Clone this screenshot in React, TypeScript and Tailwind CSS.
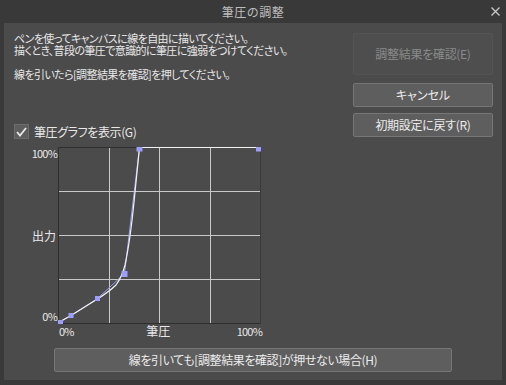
import React from "react";

const font = { fontFamily: '"Noto Sans CJK JP", "Noto Sans", sans-serif' };

function Plot() {
  const L = 0.5, T = 0.5, W = 202, H = 176;
  const xs = [0, 1, 2, 3, 4].map((i) => L + Math.round((W * i) / 4));
  const ys = [0, 1, 2, 3, 4].map((i) => T + Math.round((H * i) / 4));
  const pts: [number, number][] = [
    [0.5, 175.5],
    [13, 168.5],
    [39.5, 151.5],
    [66.5, 126.5],
    [81.5, 0.5],
    [201.5, 0.5],
  ];
  return (
    <svg width={203} height={177} className="block shrink-0">
      {xs.slice(1, 4).map((x) => (
        <line key={"v" + x} x1={x} y1={T} x2={x} y2={T + H} stroke="#c9c9c9" strokeWidth={1} />
      ))}
      {ys.slice(1, 4).map((y) => (
        <line key={"h" + y} x1={L} y1={y} x2={L + W} y2={y} stroke="#c9c9c9" strokeWidth={1} />
      ))}
      <line x1={L} y1={T} x2={L + W} y2={T} stroke="#2e2e2e" />
      <line x1={L} y1={T} x2={L} y2={T + H} stroke="#2e2e2e" />
      <line x1={L} y1={T + H} x2={L + W} y2={T + H} stroke="#2e2e2e" />
      <line x1={L + W} y1={T} x2={L + W} y2={T + H} stroke="#3a3a3a" />
      <polyline
        points={pts.map((p) => p.join(",")).join(" ")}
        fill="none"
        stroke="#9d9dfb"
        strokeWidth={1}
      />
      <path
        d="M0.5,175.5 L13,168.5 L39.5,152 Q52,144 58,138 Q64,130 67,118 Q72,95 76,55 L81.5,0.5 L201.5,0.5"
        fill="none"
        stroke="#f2f2f2"
        strokeWidth={1.2}
      />
      <rect x={0} y={173} width={5} height={5} fill="#9d9dfb" />
      <rect x={10.5} y={166} width={5} height={5} fill="#9d9dfb" />
      <rect x={37} y={149} width={5} height={5} fill="#9d9dfb" />
      <rect x={63.5} y={124} width={6} height={6} fill="#9d9dfb" />
      <rect x={78.5} y={-0.5} width={6} height={5} fill="#9d9dfb" />
      <rect x={198} y={-0.5} width={5} height={5} fill="#9d9dfb" />
    </svg>
  );
}

export default function App() {
  return (
    <div
      className="w-[506px] h-[385px] bg-[#393939] flex flex-col text-[#e8e8e8] text-[11px] overflow-hidden"
      style={font}
    >
      <div className="h-[23px] relative flex items-center justify-center shrink-0">
        <span className="text-[12px] leading-[14px] text-[#bdbdbd] tracking-[0.5px]">筆圧の調整</span>
        <svg className="absolute right-[6px] top-[7px]" width={9} height={9} viewBox="0 0 9 9">
          <path d="M0.5,0.5 L8.5,8.5 M8.5,0.5 L0.5,8.5" stroke="#c8c8c8" strokeWidth={1.3} />
        </svg>
      </div>

      <div className="mx-[4px] h-[357px] bg-[#4b4b4b] flex flex-col">
        <div className="flex">
          <div className="flex-1 pl-[10px] pt-[9px] flex flex-col">
            <div className="leading-[12px] tracking-[-0.6px]" style={{ fontFeatureSettings: '"palt"' }}>
              <div className="h-[12px]">ペンを使ってキャンバスに線を自由に描いてください。</div>
              <div className="h-[12px]">描くとき、普段の筆圧で意識的に筆圧に強弱をつけてください。</div>
              <div className="h-[12px]" />
              <div className="h-[12px]">線を引いたら[調整結果を確認]を押してください。</div>
            </div>
            <div className="mt-[44px] flex items-center gap-[5px]">
              <div className="w-[15px] h-[15px] bg-[#5e5e5e] border border-[#6c6c6c] flex items-center justify-center">
                <svg width={11} height={10} viewBox="0 0 11 10">
                  <path d="M1,5 L4,8.5 L10,1" fill="none" stroke="#e8e8e8" strokeWidth={1.8} />
                </svg>
              </div>
              <span className="leading-[12px] text-[12px] tracking-[-0.4px]" style={{ fontFeatureSettings: '"palt"' }}>
                筆圧グラフを表示(G)
              </span>
            </div>
          </div>
          <div className="w-[140px] mr-[9px] pt-[10px] flex flex-col">
            <div className="h-[42px] bg-[#4e4e4e] border border-[#545454] rounded-[2px] flex items-center justify-center text-[#8a8a8a] text-[12px]">
              <span style={{ fontFeatureSettings: '"palt"' }} className="tracking-[-0.3px]">調整結果を確認(E)</span>
            </div>
            <div className="mt-[8px] h-[24px] bg-[#5e5e5e] border border-[#767676] rounded-[2px] flex items-center justify-center text-[12px] text-[#ececec]">
              <span style={{ fontFeatureSettings: '"palt"' }}>キャンセル</span>
            </div>
            <div className="mt-[6px] h-[24px] bg-[#5e5e5e] border border-[#767676] rounded-[2px] flex items-center justify-center text-[12px] text-[#ececec]">
              <span style={{ fontFeatureSettings: '"palt"' }} className="tracking-[-0.3px]">初期設定に戻す(R)</span>
            </div>
          </div>
        </div>

        <div className="mt-[8px] flex pl-[10px]">
          <div className="w-[44px] h-[177px] flex flex-col justify-between items-end pr-[1px] pt-[1px] pb-[2px] leading-[11px] tracking-[-0.8px]">
            <span>100%</span>
            <span className="text-[12px] tracking-[0px] mr-[1px]">出力</span>
            <span>0%</span>
          </div>
          <Plot />
        </div>
        <div className="ml-[54px] w-[204px] mt-[1px] flex justify-between items-center leading-[12px] tracking-[-0.8px]">
          <span className="ml-[1px]">0%</span>
          <span className="text-[12px] tracking-[0px] ml-[6px]">筆圧</span>
          <span>100%</span>
        </div>

        <div className="mt-[11px] mx-auto w-[398px] h-[24px] bg-[#5e5e5e] border border-[#767676] rounded-[2px] flex items-center justify-center text-[12px] text-[#ececec]">
          <span style={{ fontFeatureSettings: '"palt"' }} className="tracking-[-0.4px]">
            線を引いても[調整結果を確認]が押せない場合(H)
          </span>
        </div>
      </div>
    </div>
  );
}
